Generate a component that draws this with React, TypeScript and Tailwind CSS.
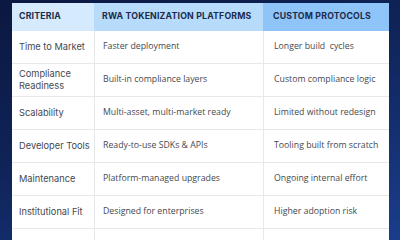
import React from "react";

const rows: [string, string, string][] = [
  ["Time to Market", "Faster deployment", "Longer build  cycles"],
  ["Compliance Readiness", "Built-in compliance layers", "Custom compliance logic"],
  ["Scalability", "Multi-asset, multi-market ready", "Limited without redesign"],
  ["Developer Tools", "Ready-to-use SDKs & APIs", "Tooling built from scratch"],
  ["Maintenance", "Platform-managed upgrades", "Ongoing internal effort"],
  ["Institutional Fit", "Designed for enterprises", "Higher adoption risk"],
  ["", "", ""],
];

export default function App() {
  return (
    <div className="w-[400px] h-[240px] overflow-hidden bg-[linear-gradient(160deg,#0b1840_0%,#0f2459_45%,#1a3d8c_100%)] pl-3 pt-[3px]">
      <div className="w-[377px] bg-white">
        <div className="grid grid-cols-[82px_169px_126px] h-[28px] text-[8.75px] font-bold text-[#1b2b4b] font-['Inter',sans-serif] tracking-[0.02em]">
          <div className="bg-[#d5ebfd] flex items-center pl-[7px]">CRITERIA</div>
          <div className="bg-[#b7dbfb] flex items-center pl-2">RWA TOKENIZATION PLATFORMS</div>
          <div className="bg-[#8ec4f8] flex items-center pl-[10px]">CUSTOM PROTOCOLS</div>
        </div>
        {rows.map((r, i) => (
          <div
            key={i}
            className="grid grid-cols-[82px_169px_126px] h-[33px] border-b border-[#e6e8ec] text-[#45484e]"
          >
            <div className="flex items-center pl-[7px] text-[9.25px] leading-[12px] font-['Inter',sans-serif]">{r[0]}</div>
            <div className="flex items-center pl-2 border-l border-[#e6e8ec] text-[8.75px] font-['Open_Sans',sans-serif] whitespace-pre">{r[1]}</div>
            <div className="flex items-center pl-[10px] border-l border-[#e6e8ec] text-[8.75px] font-['Open_Sans',sans-serif] whitespace-pre">{r[2]}</div>
          </div>
        ))}
      </div>
    </div>
  );
}
